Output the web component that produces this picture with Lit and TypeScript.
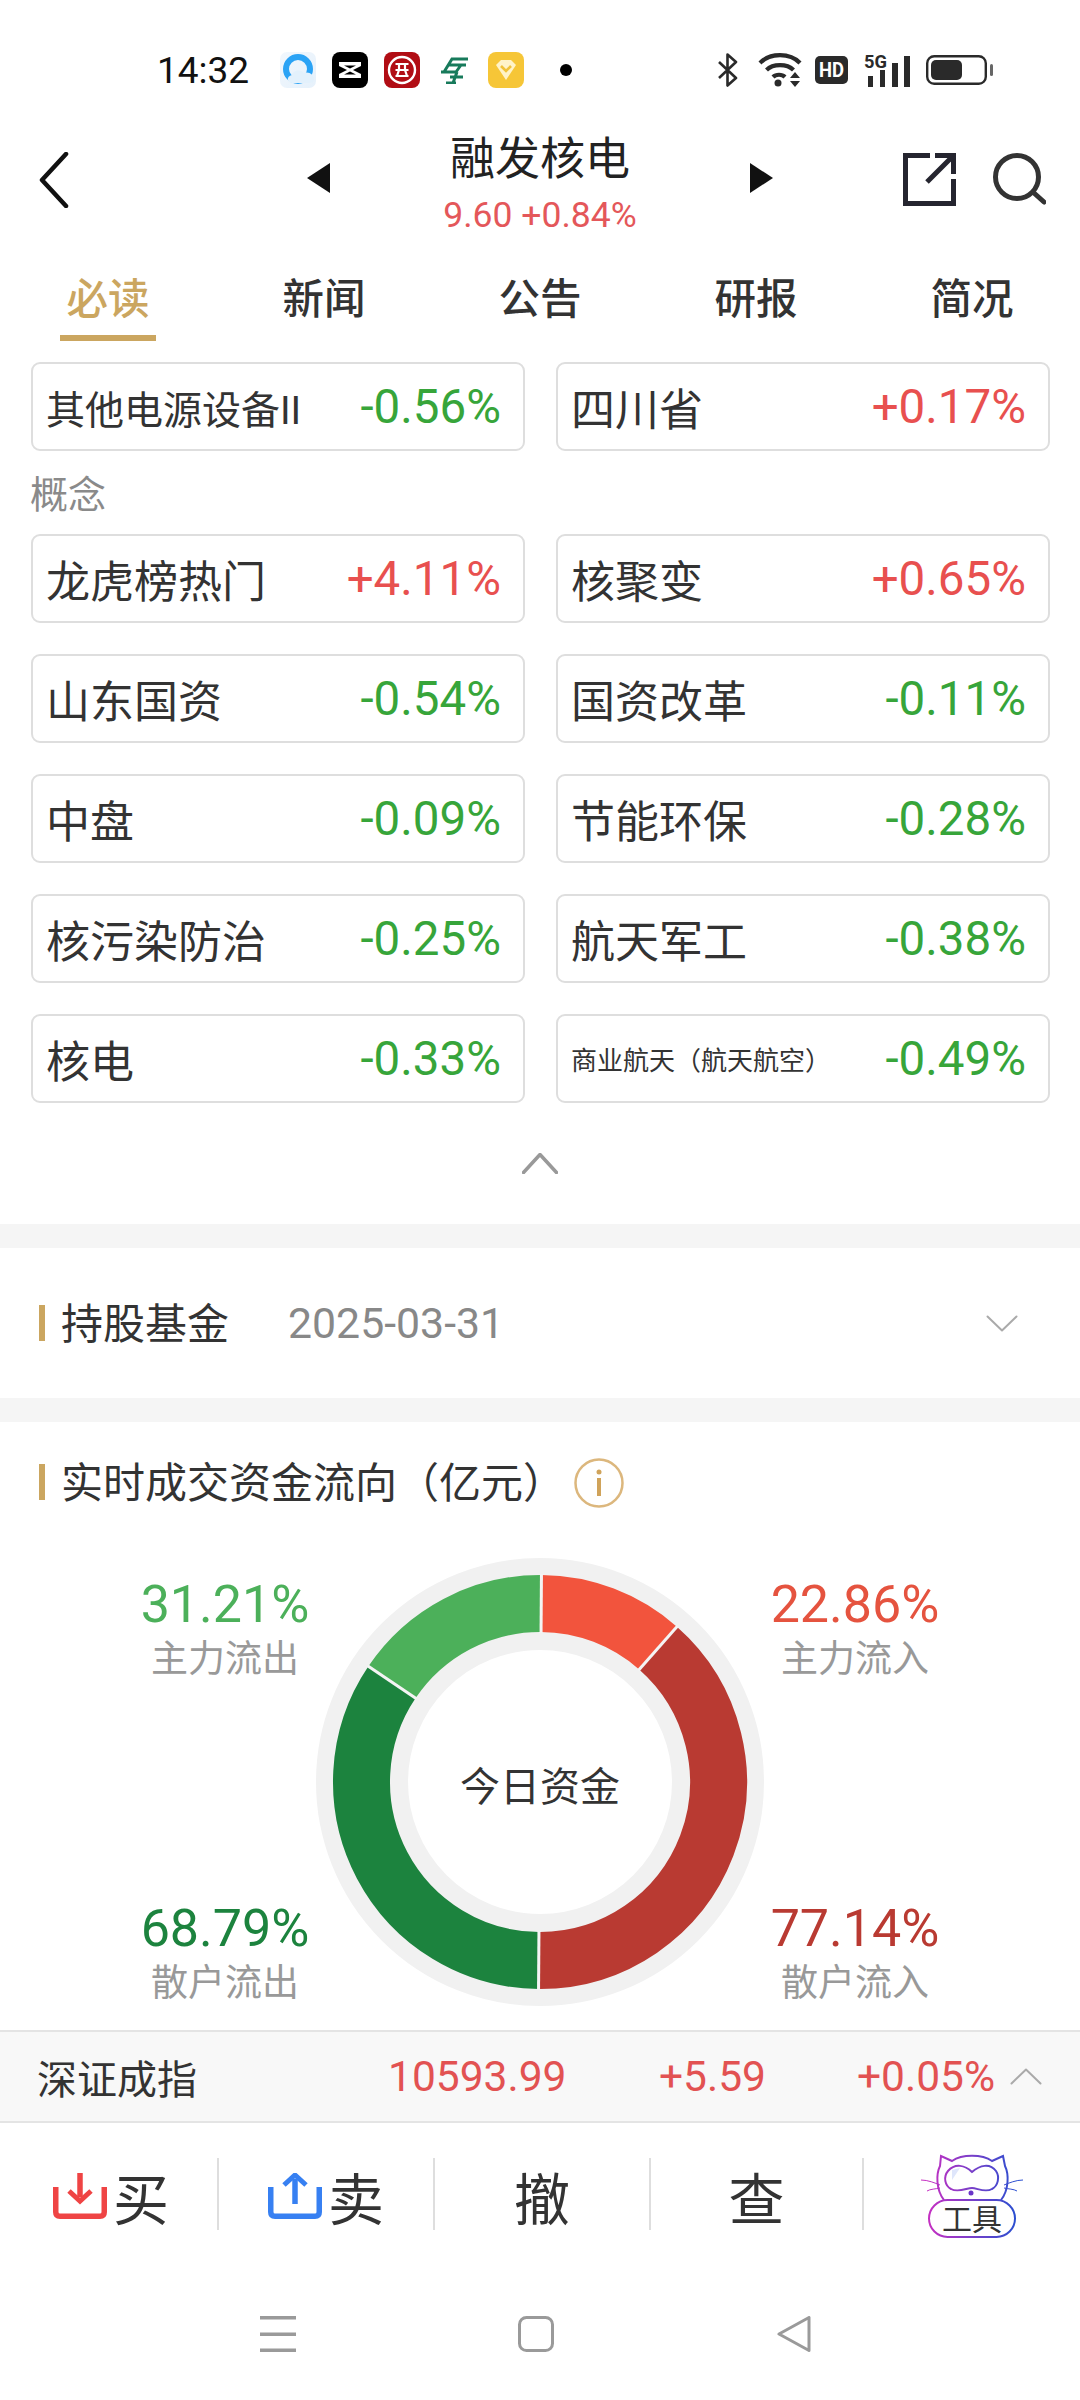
import { LitElement, html, css, svg } from "lit";
import { customElement } from "lit/decorators.js";

type Card = { name: string; pct: string; size?: string };
const FIRST: Card[] = [
  { name: "其他电源设备II", pct: "-0.56%", size: "sm" },
  { name: "四川省", pct: "+0.17%" },
];
const CONCEPTS: Card[] = [
  { name: "龙虎榜热门", pct: "+4.11%" },
  { name: "核聚变", pct: "+0.65%" },
  { name: "山东国资", pct: "-0.54%" },
  { name: "国资改革", pct: "-0.11%" },
  { name: "中盘", pct: "-0.09%" },
  { name: "节能环保", pct: "-0.28%" },
  { name: "核污染防治", pct: "-0.25%" },
  { name: "航天军工", pct: "-0.38%" },
  { name: "核电", pct: "-0.33%" },
  { name: "商业航天（航天航空）", pct: "-0.49%", size: "xs" },
];
const TABS = ["必读", "新闻", "公告", "研报", "简况"];

const CX = 224, CY = 224, R = 178.5;
const pt = (deg: number, r: number) => {
  const a = ((deg - 90) * Math.PI) / 180;
  return [CX + r * Math.cos(a), CY + r * Math.sin(a)];
};
const arc = (from: number, to: number) => {
  const [x1, y1] = pt(from, R);
  const [x2, y2] = pt(to, R);
  return `M${x1} ${y1}A${R} ${R} 0 ${to - from > 180 ? 1 : 0} 1 ${x2} ${y2}`;
};
const SEGMENTS: [number, number, string][] = [
  [0.4, 41.4, "#f2543d"],
  [41.4, 180.4, "#b93a32"],
  [180.4, 304, "#1c833e"],
  [304, 360.4, "#4cb05a"],
];

const chevron = (up: boolean, w: number, h: number, color: string, sw: number) => html`
  <svg width=${w} height=${h} viewBox="0 0 ${w} ${h}" fill="none" stroke=${color} stroke-width=${sw} stroke-linecap="round" stroke-linejoin="round">
    <path d=${up ? `M1.5 ${h - 1.5}L${w / 2} 1.5L${w - 1.5} ${h - 1.5}` : `M1.5 1.5L${w / 2} ${h - 1.5}L${w - 1.5} 1.5`} />
  </svg>`;

@customElement("app-root")
export class AppRoot extends LitElement {
  static styles = css`
    :host {
      display: block;
      width: 1080px;
      height: 2400px;
      overflow: hidden;
      background: #fff;
      color: #333;
      font-family: Roboto, "Noto Sans CJK SC", sans-serif;
    }
    svg { display: block; flex: none; }
    .status { height: 52px; padding: 44px 87px 0 157px; display: flex; align-items: center; }
    .time { width: 123px; font-size: 37px; color: #111; white-space: nowrap; }
    .apps { display: flex; align-items: center; gap: 16px; }
    .dot { width: 12px; height: 12px; border-radius: 50%; background: #000; margin-left: 20px; }
    .sys { margin-left: auto; display: flex; align-items: center; }
    .nav { height: 146px; box-sizing: border-box; padding-top: 18px; display: flex; align-items: center; }
    .nav-left { width: 307px; padding-left: 39px; box-sizing: border-box; margin-top: 3px; }
    .nav-mid { flex: 1; text-align: center; margin-top: 7px; }
    .nav-title { font-size: 45px; line-height: 62px; color: #222; }
    .nav-price { font-size: 35.5px; line-height: 40px; color: #e4575a; margin-top: 4px; }
    .nav-right { width: 307px; padding-left: 130px; box-sizing: border-box; display: flex; gap: 37px; margin-top: 2px; }
    .tabs { display: grid; grid-template-columns: repeat(5, 216px); padding-top: 32px; }
    .tab { display: flex; flex-direction: column; align-items: center; font-size: 41.5px; line-height: 52px; font-weight: 500; color: #333; }
    .tab.on { color: #cba660; }
    .tab .line { width: 96px; height: 6px; margin-top: 9px; }
    .tab.on .line { background: #cba660; }
    .grid { display: grid; grid-template-columns: 494px 494px; column-gap: 31px; row-gap: 31px; padding: 0 30px 0 31px; }
    .grid.first { margin-top: 21px; }
    .caption { height: 83px; padding-left: 30px; padding-top: 3px; font-size: 38px; line-height: 83px; color: #8a8a8a; box-sizing: border-box; }
    .card {
      height: 89px; box-sizing: border-box; border: 2px solid #dedede; border-radius: 9px;
      display: flex; align-items: center; justify-content: space-between; padding: 0 22px 0 13px;
    }
    .card .name { font-size: 44px; color: #333; white-space: nowrap; }
    .card .name.sm { font-size: 39px; }
    .card .name.xs { font-size: 26px; }
    .pct { font-size: 47.5px; white-space: nowrap; }
    .pct.up { color: #e8504f; }
    .pct.down { color: #37a53a; }
    .more { height: 121px; display: flex; justify-content: center; padding-top: 50px; box-sizing: border-box; }
    .band { height: 24px; background: #f5f5f5; }
    .fund { height: 150px; display: flex; align-items: center; padding: 0 62px 0 39px; }
    .bar { width: 6px; height: 36px; background: #cba660; margin-right: 16px; }
    .fund .h, .flow-head .h { font-size: 42px; color: #333; margin-top: -5px; }
    .date { font-size: 42.8px; color: #888; margin-left: 59px; flex: 1; }
    .flow-head { height: 60px; margin-top: 30px; display: flex; align-items: center; padding-left: 39px; }
    .flow-head .h { white-space: nowrap; }
    .info { margin-left: 9px; margin-top: 1px; }
    .chart { display: grid; grid-template-columns: 1fr 448px 1fr; margin-top: 46px; height: 472px; }
    .side { display: flex; flex-direction: column; gap: 214px; padding: 19px 0 0 134px; box-sizing: border-box; text-align: center; white-space: nowrap; }
    .side.right { padding: 19px 134px 0 0; }
    .val { font-size: 52px; line-height: 55px; }
    .lab { font-size: 37px; line-height: 55px; color: #999; }
    .donut { position: relative; height: 448px; }
    .donut-text { position: absolute; inset: 0; display: flex; align-items: center; justify-content: center; font-size: 40px; color: #333; padding-top: 4px; box-sizing: border-box; }
    .ticker {
      height: 93px; box-sizing: border-box; background: #f8f8f8; border-top: 2px solid #e4e4e4; border-bottom: 2px solid #e4e4e4;
      display: grid; grid-template-columns: 351px 271px 198px 153px 32px; align-items: center; padding-left: 37px; font-size: 42.5px; color: #e25252;
    }
    .ticker .tn { font-size: 40px; color: #333; }
    .tools { display: grid; grid-template-columns: 219px 216px 216px 213px 1fr; padding-top: 35px; }
    .tool { height: 72px; border-right: 2px solid #dedede; display: flex; align-items: center; justify-content: center; gap: 6px; font-size: 56px; color: #333; box-sizing: border-box; }
    .tool:last-child { border-right: 0; }
    .tool svg { margin-top: 4px; }
    .tool span { margin-top: 2px; }
    .tool.buy { padding-left: 5px; }
    .sysnav { display: grid; grid-template-columns: repeat(3, 258px); padding: 86px 0 0 149px; justify-items: center; }
  `;

  private card(c: Card) {
    return html`<div class="card">
      <span class="name ${c.size ?? ""}">${c.name}</span>
      <span class="pct ${c.pct.startsWith("+") ? "up" : "down"}">${c.pct}</span>
    </div>`;
  }

  private appIcons() {
    return html`<div class="apps">
      <svg width="36" height="36" viewBox="0 0 36 36">
        <defs><linearGradient id="qq" x1="0" y1="0" x2="1" y2="1"><stop offset="0" stop-color="#f1f7fd"/><stop offset="1" stop-color="#e6f1fb"/></linearGradient></defs>
        <rect width="36" height="36" rx="7" fill="url(#qq)"/>
        <circle cx="18" cy="17" r="12" fill="none" stroke="#2ba3f5" stroke-width="6"/>
        <path d="M12 31c-5 0-6-7 0-8 1-5 9-6 12-2 5-2 10 2 10 6 0 3-2 4-4 4z" fill="#e3f1fc"/>
      </svg>
      <svg width="36" height="36" viewBox="0 0 36 36">
        <rect width="36" height="36" rx="8" fill="#000"/>
        <path d="M7 10H29V14L21 18L29 22V26H7V22L15 18L7 14Z" fill="#fff"/>
        <path d="M12 13.5H24L18 16.5Z M12 22.5H24L18 19.5Z" fill="#000"/>
      </svg>
      <svg width="36" height="36" viewBox="0 0 36 36">
        <rect width="36" height="36" rx="8" fill="#b10d14"/>
        <circle cx="18" cy="18" r="13" fill="none" stroke="#fff" stroke-width="2.4"/>
        <path d="M11.5 12H24.5M11.5 24H24.5M11.5 18H24.5M15 12V18M21 12V18M15 18L13 24M21 18L23 24" fill="none" stroke="#fff" stroke-width="2.2"/>
      </svg>
      <svg width="27" height="27" viewBox="0 0 27 27" style="margin:0 4px 0 5px" fill="none" stroke="#177a5b" stroke-width="3">
        <path d="M27 2H11L3 15M25 8H8M0 15H16M22 20H9M15 26L5 26M16 15L12 26M20 8L15 15"/>
      </svg>
      <svg width="36" height="36" viewBox="0 0 36 36">
        <rect width="36" height="36" rx="8" fill="#f6c637"/>
        <path d="M8 13L13 8H23L28 13L18 28Z" fill="#fff3c8"/>
        <path d="M13 14L18 19L23 14" fill="none" stroke="#f0c23a" stroke-width="2.600"/>
      </svg>
      <div class="dot"></div>
    </div>`;
  }

  private sysIcons() {
    return html`<div class="sys">
      <svg width="20" height="34" viewBox="0 0 20 34" fill="none" stroke="#2a2a2a" stroke-width="2.600" stroke-linejoin="round" style="margin-right:20px">
        <path d="M1 9L18 25L9.500 32.500V1.500L18 9L1 25"/>
      </svg>
      <svg width="44" height="34" viewBox="0 0 44 34" style="margin-right:13px" fill="none" stroke="#2a2a2a" stroke-width="4.200">
        <path d="M2 10C12 -0.500 32 -0.500 42 10"/>
        <path d="M8.500 17C15 10.500 29 10.500 35.500 17"/>
        <path d="M15 24C18 21 24 21 27 24"/>
        <circle cx="20" cy="30" r="3.500" fill="#2a2a2a" stroke="none"/>
        <path d="M32 25L37 19L42 25ZM32 28H42L37 34Z" fill="#2a2a2a" stroke="none"/>
      </svg>
      <svg width="33" height="28" viewBox="0 0 33 28" style="margin-right:16px">
        <rect width="33" height="28" rx="5" fill="#2a2a2a"/>
        <text x="16.500" y="21" text-anchor="middle" font-family="Roboto" font-weight="700" font-size="20" fill="#fff" textLength="25" lengthAdjust="spacingAndGlyphs">HD</text>
      </svg>
      <svg width="46" height="45" viewBox="0 -6 46 45" style="margin-right:16px">
        <text x="0" y="14" font-family="Roboto" font-weight="700" font-size="18" fill="#2a2a2a" textLength="23" lengthAdjust="spacingAndGlyphs">5G</text>
        <rect x="4" y="22" width="5" height="11" fill="#2a2a2a"/>
        <rect x="16" y="16" width="5" height="17" fill="#2a2a2a"/>
        <rect x="28" y="9" width="6" height="24" fill="#2a2a2a"/>
        <rect x="40" y="2" width="6" height="31" fill="#2a2a2a"/>
      </svg>
      <svg width="67" height="30" viewBox="0 0 67 30">
        <rect x="1.200" y="1.200" width="58.600" height="27.600" rx="7" fill="none" stroke="#2a2a2a" stroke-width="2.400"/>
        <rect x="5" y="5" width="31" height="20" rx="5" fill="#2a2a2a"/>
        <rect x="64" y="9" width="3" height="12" rx="1.500" fill="#666"/>
      </svg>
    </div>`;
  }

  private toolIcon() {
    return html`<svg width="104" height="86" viewBox="40 25 104 86">
      <defs><linearGradient id="tg" gradientUnits="userSpaceOnUse" x1="48" y1="0" x2="136" y2="0"><stop offset="0" stop-color="#c62fc2"/><stop offset="1" stop-color="#2a4fd0"/></linearGradient></defs>
      <g fill="none" stroke="url(#tg)" stroke-width="2">
        <path d="M64 72C56 62 56 46 60 38L61 28L72 33C82 26 102 26 112 33L123 28L125 38C129 46 129 62 121 72"/>
        <path d="M68 43C75 35 85 37 92 44C100 37 110 35 116 43C120 49 118 58 112 61C105 65 97 60 92 60C87 60 78 65 71 61C65 58 63 49 68 43Z"/>
        <path d="M41 52C48 52 55 55 60 57M47 63C50 61 56 61 60 60M143 52C136 52 129 55 124 57M137 63C134 61 128 61 124 60" stroke-width="1"/>
        <rect x="49" y="72" width="86" height="37" rx="18.500"/>
      </g>
      <path d="M72 42L80 40L72 52Z" fill="#dfe6fb"/>
      <circle cx="91" cy="65" r="2.500" fill="#6a35c8"/>
      <text x="92" y="102" text-anchor="middle" font-family="'Noto Sans CJK SC'" font-size="30" fill="#333">工具</text>
    </svg>`;
  }

  render() {
    return html`
      <div class="status">
        <div class="time">14:32</div>
        ${this.appIcons()}
        ${this.sysIcons()}
      </div>

      <div class="nav">
        <div class="nav-left">
          <svg width="30" height="56" viewBox="0 0 30 56" fill="none" stroke="#111" stroke-width="4.500" stroke-linecap="round" stroke-linejoin="round"><path d="M27 2L3 28L27 54"/></svg>
        </div>
        <svg width="23" height="30" viewBox="0 0 23 30"><path d="M23 0V30L0 15Z" fill="#111"/></svg>
        <div class="nav-mid">
          <div class="nav-title">融发核电</div>
          <div class="nav-price">9.60 +0.84%</div>
        </div>
        <svg width="23" height="30" viewBox="0 0 23 30"><path d="M0 0V30L23 15Z" fill="#111"/></svg>
        <div class="nav-right">
          <svg width="53" height="53" viewBox="0 0 53 53" fill="none" stroke="#25252f" stroke-width="5">
            <path d="M27 2.500H2.500V50.500H50.500V26"/>
            <path d="M32 2.500H50.500V21M50 3L24 29"/>
          </svg>
          <svg width="53" height="52" viewBox="0 0 53 52" fill="none" stroke="#333" stroke-width="5" stroke-linecap="round">
            <circle cx="24" cy="24" r="21.500"/><path d="M41 40L51 49"/>
          </svg>
        </div>
      </div>

      <div class="tabs">
        ${TABS.map((t, i) => html`<div class="tab ${i === 0 ? "on" : ""}">${t}<div class="line"></div></div>`)}
      </div>

      <div class="grid first">${FIRST.map((c) => this.card(c))}</div>
      <div class="caption">概念</div>
      <div class="grid">${CONCEPTS.map((c) => this.card(c))}</div>
      <div class="more">${chevron(true, 36, 21, "#999", 3.5)}</div>
      <div class="band"></div>

      <div class="fund">
        <div class="bar"></div>
        <div class="h">持股基金</div>
        <div class="date">2025-03-31</div>
        ${chevron(false, 32, 17, "#aaa", 2)}
      </div>
      <div class="band"></div>

      <div class="flow-head">
        <div class="bar"></div>
        <div class="h">实时成交资金流向（亿元）</div>
        <svg class="info" width="50" height="50" viewBox="0 0 50 50">
          <circle cx="25" cy="25" r="23.500" fill="none" stroke="#dcb77d" stroke-width="2.500"/>
          <circle cx="25" cy="14" r="2.500" fill="#d0a35a"/>
          <rect x="23" y="20" width="4" height="18" fill="#d0a35a"/>
        </svg>
      </div>

      <div class="chart">
        <div class="side">
          <div><div class="val" style="color:#4cb05a">31.21%</div><div class="lab">主力流出</div></div>
          <div><div class="val" style="color:#1c833e">68.79%</div><div class="lab">散户流出</div></div>
        </div>
        <div class="donut">
          <svg width="448" height="448" viewBox="0 0 448 448">
            <circle cx=${CX} cy=${CY} r="178" fill="none" stroke="#f1f1f1" stroke-width="92"/>
            ${SEGMENTS.map(([a, b, c]) => svg`<path d=${arc(a, b)} fill="none" stroke=${c} stroke-width="57"/>`)}
            ${[0.4, 41.4, 180.4, 304].map((a) => {
              const [x1, y1] = pt(a, 149);
              const [x2, y2] = pt(a, 208);
              return svg`<line x1=${x1} y1=${y1} x2=${x2} y2=${y2} stroke="#f4f4f4" stroke-width="3"/>`;
            })}
          </svg>
          <div class="donut-text">今日资金</div>
        </div>
        <div class="side right">
          <div><div class="val" style="color:#e5533f">22.86%</div><div class="lab">主力流入</div></div>
          <div><div class="val" style="color:#b93a32">77.14%</div><div class="lab">散户流入</div></div>
        </div>
      </div>

      <div class="ticker">
        <div class="tn">深证成指</div>
        <div>10593.99</div>
        <div>+5.59</div>
        <div>+0.05%</div>
        ${chevron(true, 32, 17, "#aaa", 2)}
      </div>

      <div class="tools">
        <div class="tool buy">
          <svg width="54" height="46" viewBox="0 0 54 46" fill="none" stroke="#ef4444" stroke-width="5.500">
            <path d="M2.750 14V39Q2.750 43.250 7 43.250H47Q51.250 43.250 51.250 39V14"/>
            <path d="M27 0V24" />
            <path d="M16 18L27 28L38 18" stroke-width="5"/>
          </svg>
          <span>买</span>
        </div>
        <div class="tool">
          <svg width="54" height="46" viewBox="0 0 54 46" fill="none" stroke="#3780f2" stroke-width="5.500">
            <path d="M2.750 14V39Q2.750 43.250 7 43.250H47Q51.250 43.250 51.250 39V14"/>
            <path d="M27 6V31"/>
            <path d="M16 12L27 2L38 12" stroke-width="5"/>
          </svg>
          <span>卖</span>
        </div>
        <div class="tool"><span>撤</span></div>
        <div class="tool"><span>查</span></div>
        <div class="tool">${this.toolIcon()}</div>
      </div>

      <div class="sysnav">
        <svg width="36" height="36" viewBox="0 0 36 36" fill="#9a9a9a"><rect width="36" height="3.500"/><rect y="16.500" width="36" height="3.500"/><rect y="32.500" width="36" height="3.500"/></svg>
        <svg width="36" height="36" viewBox="0 0 36 36" fill="none" stroke="#9a9a9a" stroke-width="3"><rect x="1.500" y="1.500" width="33" height="33" rx="7"/></svg>
        <svg width="34" height="36" viewBox="0 0 34 36" fill="none" stroke="#9a9a9a" stroke-width="3" stroke-linejoin="round"><path d="M32 1.500V34.500L2 18Z"/></svg>
      </div>
    `;
  }
}
